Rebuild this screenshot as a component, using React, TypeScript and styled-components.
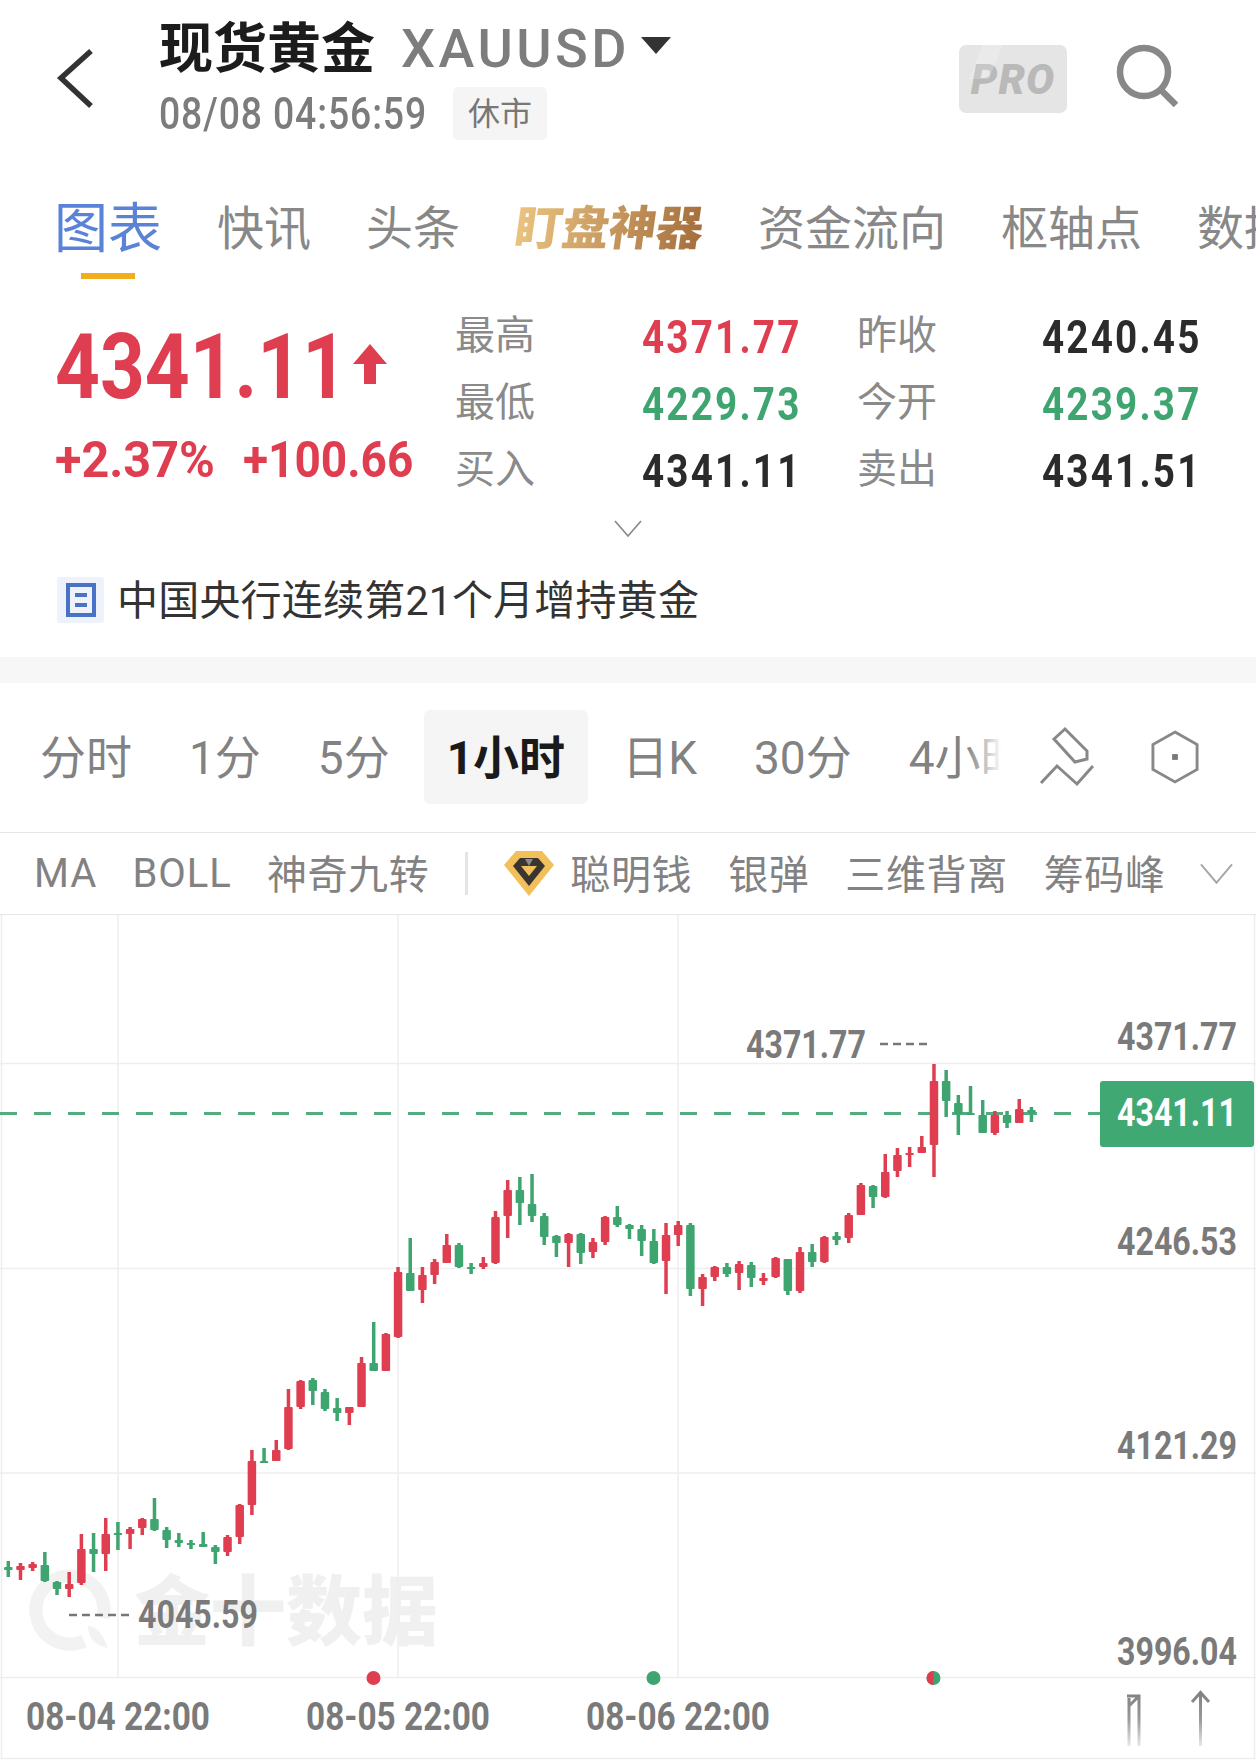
import React from 'react';
import styled, { createGlobalStyle } from 'styled-components';

const SANS = `Roboto, "Noto Sans CJK SC", sans-serif`;
const CJK = `"Noto Sans CJK SC", sans-serif`;

const RED = '#de3e50';
const GREEN = '#3fa570';
const GRID = '#eeeeee';
const AXIS_TEXT = '#7a7a7a';

// x is derived from the index, each row: wick top, wick bottom, body top, body bottom, colour
const candles: [number, number, number, number, 'r' | 'g'][] = [
  [1561, 1577, 1567, 1570, 'g'], [1563, 1580, 1566, 1570, 'r'], [1562, 1571, 1564, 1568, 'r'],
  [1552, 1582, 1565, 1581, 'g'], [1581, 1595, 1582, 1589, 'g'], [1572, 1597, 1584, 1589, 'r'],
  [1534, 1585, 1549, 1583, 'r'], [1533, 1572, 1549, 1554, 'g'], [1518, 1571, 1534, 1554, 'r'],
  [1522, 1550, 1533, 1535, 'g'], [1527, 1549, 1529, 1534, 'r'], [1518, 1535, 1519, 1528, 'r'],
  [1498, 1531, 1519, 1530, 'g'], [1527, 1548, 1530, 1540, 'g'], [1533, 1547, 1540, 1543, 'g'],
  [1540, 1549, 1543, 1545, 'g'], [1532, 1547, 1544, 1547, 'g'], [1545, 1564, 1547, 1552, 'g'],
  [1535, 1556, 1537, 1552, 'r'], [1504, 1544, 1505, 1537, 'r'], [1450, 1515, 1461, 1505, 'r'],
  [1448, 1463, 1461, 1463, 'g'], [1440, 1461, 1450, 1461, 'r'], [1389, 1450, 1407, 1449, 'r'],
  [1380, 1409, 1381, 1407, 'r'], [1378, 1405, 1380, 1391, 'g'], [1389, 1411, 1392, 1409, 'g'],
  [1398, 1421, 1408, 1413, 'g'], [1407, 1425, 1407, 1413, 'r'], [1357, 1407, 1363, 1407, 'r'],
  [1322, 1371, 1363, 1371, 'g'], [1333, 1371, 1334, 1371, 'r'], [1267, 1338, 1272, 1337, 'r'],
  [1238, 1291, 1273, 1291, 'g'], [1267, 1303, 1275, 1290, 'r'], [1259, 1284, 1262, 1275, 'r'],
  [1234, 1263, 1245, 1263, 'r'], [1243, 1268, 1245, 1267, 'g'], [1263, 1274, 1267, 1269, 'g'],
  [1257, 1269, 1263, 1267, 'r'], [1211, 1264, 1217, 1263, 'r'], [1180, 1238, 1190, 1216, 'r'],
  [1177, 1225, 1190, 1203, 'g'], [1174, 1222, 1204, 1216, 'g'], [1213, 1245, 1216, 1237, 'g'],
  [1235, 1257, 1236, 1243, 'g'], [1233, 1267, 1234, 1243, 'r'], [1233, 1264, 1234, 1253, 'g'],
  [1238, 1258, 1242, 1252, 'r'], [1216, 1245, 1217, 1242, 'r'], [1206, 1227, 1217, 1225, 'g'],
  [1224, 1239, 1225, 1229, 'g'], [1225, 1256, 1229, 1241, 'g'], [1229, 1264, 1241, 1263, 'g'],
  [1223, 1294, 1235, 1261, 'r'], [1221, 1246, 1225, 1235, 'r'], [1223, 1296, 1225, 1289, 'g'],
  [1274, 1306, 1277, 1289, 'r'], [1266, 1281, 1267, 1277, 'r'], [1263, 1277, 1267, 1274, 'g'],
  [1261, 1290, 1264, 1273, 'r'], [1262, 1287, 1265, 1278, 'g'], [1273, 1285, 1278, 1281, 'r'],
  [1257, 1278, 1258, 1277, 'r'], [1259, 1295, 1259, 1291, 'g'], [1247, 1293, 1252, 1291, 'r'],
  [1244, 1267, 1252, 1262, 'g'], [1236, 1263, 1237, 1262, 'r'], [1232, 1245, 1236, 1240, 'g'],
  [1213, 1243, 1215, 1238, 'r'], [1183, 1215, 1185, 1215, 'r'], [1185, 1208, 1186, 1197, 'g'],
  [1154, 1198, 1172, 1197, 'r'], [1148, 1177, 1155, 1171, 'r'], [1147, 1167, 1153, 1155, 'r'],
  [1136, 1153, 1147, 1153, 'r'], [1064, 1177, 1081, 1145, 'r'], [1070, 1117, 1081, 1101, 'g'],
  [1095, 1135, 1103, 1114, 'g'], [1086, 1115, 1113, 1115, 'g'], [1100, 1133, 1115, 1133, 'g'],
  [1111, 1135, 1115, 1133, 'r'], [1111, 1128, 1115, 1123, 'g'], [1099, 1123, 1109, 1123, 'r'],
  [1107, 1122, 1110, 1113, 'g'],
];

const stats = [
  { label: '最高', value: '4371.77', color: RED, label2: '昨收', value2: '4240.45', color2: '#2b2b2b' },
  { label: '最低', value: '4229.73', color: GREEN, label2: '今开', value2: '4239.37', color2: GREEN },
  { label: '买入', value: '4341.11', color: '#2b2b2b', label2: '卖出', value2: '4341.51', color2: '#2b2b2b' },
];

const tabs = ['快讯', '头条'];
const tabsAfter = ['资金流向', '枢轴点', '数据'];
const periods = ['分时', '1分', '5分', '1小时', '日K', '30分', '4小时'];
const indicatorsRight = ['银弹', '三维背离', '筹码峰'];

const GlobalStyle = createGlobalStyle`
  html, body {
    margin: 0;
    padding: 0;
    background: #ffffff;
  }
  #root {
    height: 1760px;
    overflow: hidden;
  }
`;

const Page = styled.div`
  width: 1256px;
  font-family: ${SANS};
  background: #ffffff;
`;

const Header = styled.header`
  height: 180px;
  display: flex;
  align-items: flex-start;
  box-sizing: border-box;
`;

const BackIcon = styled.svg`
  width: 40px;
  height: 64px;
  margin: 47px 0 0 56px;
  flex: none;
`;

const TitleBlock = styled.div`
  margin-left: 63px;
  padding-top: 18px;
  display: flex;
  flex-direction: column;
  flex: 1;
`;

const TitleRow = styled.div`
  display: flex;
  align-items: center;
  height: 60px;
`;

const Title = styled.h1`
  margin: 0 0 7px;
  font-size: 54px;
  font-weight: 700;
  color: #1c1c1c;
  font-family: ${CJK};
`;

const Symbol = styled.span`
  margin-left: 26px;
  font-size: 54px;
  font-weight: 500;
  letter-spacing: 3.5px;
  color: #7d7d7d;
`;

const Caret = styled.span`
  width: 0;
  height: 0;
  margin: 0 0 6px 11px;
  border-left: 15px solid transparent;
  border-right: 15px solid transparent;
  border-top: 17px solid #333333;
`;

const SubRow = styled.div`
  display: flex;
  align-items: center;
  margin-top: 9px;
`;

// there is no DIN style face installed, the numerals are Roboto narrowed on the x axis
const Clock = styled.span`
  width: 265px;
  font-size: 44px;
  font-weight: 500;
  letter-spacing: 1px;
  color: #7c7c7c;
  white-space: nowrap;
  transform: scaleX(0.85);
  transform-origin: left center;
`;

const StatusBadge = styled.span`
  margin-left: 29px;
  width: 94px;
  height: 53px;
  padding-bottom: 6px;
  box-sizing: border-box;
  border-radius: 5px;
  background: #f5f5f5;
  color: #777777;
  font-size: 32px;
  display: flex;
  align-items: center;
  justify-content: center;
  font-family: ${CJK};
`;

const ProBadge = styled.div`
  position: relative;
  overflow: hidden;
  width: 108px;
  height: 68px;
  margin: 45px 49px 0 0;
  border-radius: 7px;
  background: #e5e5e5;
  color: #b9b9b9;
  font-size: 42px;
  font-weight: 900;
  font-style: italic;
  letter-spacing: 1px;
  display: flex;
  align-items: center;
  justify-content: center;
  flex: none;
  &::before {
    content: '';
    position: absolute;
    top: -6px;
    left: 18px;
    width: 20px;
    height: 40px;
    background: rgba(255, 255, 255, 0.2);
    transform: skewX(-22deg);
  }
`;

const SearchIcon = styled.svg`
  width: 64px;
  height: 64px;
  margin: 43px 76px 0 0;
  flex: none;
`;

const TabRow = styled.nav`
  height: 100px;
  display: flex;
  padding-left: 54px;
  gap: 55px;
  overflow: hidden;
  white-space: nowrap;
  font-family: ${CJK};
`;

const Tab = styled.span`
  flex: none;
  font-size: 47px;
  line-height: 89px;
  color: #888888;
`;

const ActiveTab = styled(Tab)`
  position: relative;
  font-size: 54px;
  color: #5a82d6;
  &::after {
    content: '';
    position: absolute;
    left: 27px;
    bottom: 1px;
    width: 54px;
    height: 6px;
    background: #f0ae1f;
  }
`;

const GoldTab = styled(Tab)`
  font-weight: 900;
  background: linear-gradient(90deg, #eac480, #a56e3c);
  -webkit-background-clip: text;
  background-clip: text;
  color: transparent;
  transform: skewX(-8deg);
`;

const QuoteRow = styled.section`
  margin-top: 21px;
  height: 203px;
  display: flex;
`;

const QuoteMain = styled.div`
  width: 455px;
  padding: 16px 0 0 55px;
  box-sizing: border-box;
  flex: none;
`;

const PriceLine = styled.div`
  display: flex;
  align-items: center;
  height: 100px;
`;

const Price = styled.span`
  width: 281px;
  font-size: 91px;
  font-weight: 700;
  color: ${RED};
  white-space: nowrap;
  transform: scaleX(0.86);
  transform-origin: left center;
`;

const PriceArrow = styled.svg`
  width: 34px;
  height: 40px;
  margin: 0 0 6px 17px;
`;

const ChangeLine = styled.div`
  display: flex;
  margin-top: 18px;
  font-size: 50px;
  line-height: 50px;
  font-weight: 700;
  color: ${RED};
`;

const ChangeValue = styled.span<{ $width: number; $scale: number }>`
  width: ${props => props.$width}px;
  white-space: nowrap;
  transform: scaleX(${props => props.$scale});
  transform-origin: left center;
`;

const StatGrid = styled.div`
  display: grid;
  grid-template-columns: 187px 215px 185px auto;
  grid-auto-rows: 67.4px;
  align-items: center;
`;

const StatLabel = styled.span`
  font-size: 40px;
  margin-top: -6px;
  color: #8a8a8a;
  font-family: ${CJK};
`;

const StatValue = styled.span<{ $color: string }>`
  font-size: 46px;
  font-weight: 700;
  letter-spacing: 2.6px;
  margin-top: 4px;
  color: ${props => props.$color};
  transform: scaleX(0.84);
  transform-origin: left center;
  white-space: nowrap;
`;

const ExpandRow = styled.div`
  height: 48px;
  display: flex;
  justify-content: center;
  padding-top: 16px;
  box-sizing: border-box;
`;

const NewsRow = styled.div`
  height: 105px;
  padding: 25px 0 0 57px;
  box-sizing: border-box;
  display: flex;
  align-items: flex-start;
`;

const NewsIcon = styled.svg`
  width: 47px;
  height: 46px;
  flex: none;
`;

const NewsText = styled.span`
  margin-left: 13px;
  font-size: 41px;
  line-height: 48px;
  letter-spacing: 0.2px;
  color: #333333;
`;

const Band = styled.div`
  height: 26px;
  background: #f7f7f7;
`;

const PeriodRow = styled.div`
  height: 150px;
  box-sizing: border-box;
  padding-bottom: 2px;
  border-bottom: 1px solid #e6e6e6;
  display: flex;
  align-items: center;
`;

const PeriodList = styled.div`
  position: relative;
  width: 1012px;
  padding-left: 17px;
  box-sizing: border-box;
  flex: none;
  display: flex;
  gap: 11px;
  overflow: hidden;
  &::after {
    content: '';
    position: absolute;
    top: 0;
    bottom: 0;
    right: 0;
    width: 46px;
    background: linear-gradient(90deg, rgba(255, 255, 255, 0), #ffffff 80%);
  }
`;

const Period = styled.span<{ $active: boolean }>`
  flex: none;
  height: 94px;
  line-height: 96px;
  padding: 0 23px;
  border-radius: 6px;
  font-size: 46px;
  font-weight: ${props => (props.$active ? 700 : 400)};
  color: ${props => (props.$active ? '#1a1a1a' : '#828282')};
  background: ${props => (props.$active ? '#f5f5f5' : 'transparent')};
`;

const DrawIcon = styled.svg`
  width: 58px;
  height: 62px;
  margin-left: 26px;
  flex: none;
`;

const HexIcon = styled.svg`
  width: 48px;
  height: 56px;
  margin-left: 55px;
  flex: none;
`;

const IndicatorRow = styled.div`
  height: 82px;
  box-sizing: border-box;
  border-bottom: 1px solid #e6e6e6;
  padding-left: 34px;
  display: flex;
  align-items: center;
  font-size: 40px;
  color: #828282;
  font-family: ${CJK};
`;

const Indicator = styled.span`
  flex: none;
  margin: -4px 36px 0 0;
  letter-spacing: 0.6px;
`;

const LatinIndicator = styled.span`
  flex: none;
  margin-right: 35px;
  letter-spacing: 1px;
  font-family: Roboto, sans-serif;
`;

const Divider = styled.span`
  width: 3px;
  height: 43px;
  background: #e4e4e4;
  margin-right: 36px;
`;

const Diamond = styled.svg`
  width: 50px;
  height: 45px;
  margin-right: 16px;
  flex: none;
`;

const MoreIcon = styled.svg`
  width: 33px;
  height: 22px;
  margin-left: -2px;
  flex: none;
`;

const Chart = styled.svg`
  display: block;
  width: 1256px;
  height: 845px;
`;

const Watermark = styled.text`
  font-family: ${CJK};
  font-size: 76px;
  font-weight: 900;
  fill: #f0f0f0;
`;

const AxisLabel = styled.text`
  font-family: ${SANS};
  font-size: 38px;
  font-weight: 700;
  fill: ${AXIS_TEXT};
  dominant-baseline: central;
`;

const BadgeLabel = styled(AxisLabel)`
  fill: #ffffff;
`;

const Candle = ({ index, data }: { index: number; data: (typeof candles)[number] }) => {
  const [wickTop, wickBottom, bodyTop, bodyBottom, tone] = data;
  const x = 8.3 + index * 12.18;
  const fill = tone === 'r' ? RED : GREEN;
  return (
    <g fill={fill}>
      <rect x={x - 1.75} y={wickTop} width={3.5} height={wickBottom - wickTop} />
      <rect x={x - 4.25} y={bodyTop} width={8.5} height={Math.max(bodyBottom - bodyTop, 2)} rx={1} />
    </g>
  );
};

const priceLength = { textLength: 120, lengthAdjust: 'spacingAndGlyphs' as const };
const timeLength = { textLength: 184, lengthAdjust: 'spacingAndGlyphs' as const };

const KlineChart = () => (
  <Chart viewBox="0 915 1256 845">
    <defs>
      <linearGradient id="fadeArrow" x1="0" y1="1692" x2="0" y2="1746" gradientUnits="userSpaceOnUse">
        <stop offset="0" stopColor="#808080" />
        <stop offset="0.5" stopColor="#999999" />
        <stop offset="1" stopColor="#e8e8e8" />
      </linearGradient>
    </defs>

    {/* watermark sits under the grid and the candles */}
    <path d="M84 1641 A34 34 0 1 1 103 1618" fill="none" stroke="#f2f2f2" strokeWidth="13" />
    <path d="M88 1626 Q100 1626 108 1648 Q88 1644 88 1626Z" fill="#f2f2f2" />
    <Watermark x="134" y="1639">金十数据</Watermark>

    <g stroke={GRID} strokeWidth="1.5">
      <line x1="1.5" y1="915" x2="1.5" y2="1758" />
      <line x1="1254.5" y1="915" x2="1254.5" y2="1758" />
      <line x1="118" y1="915" x2="118" y2="1678" />
      <line x1="398" y1="915" x2="398" y2="1678" />
      <line x1="678" y1="915" x2="678" y2="1678" />
      <line x1="0" y1="1063.5" x2="1256" y2="1063.5" />
      <line x1="0" y1="1268.5" x2="1256" y2="1268.5" />
      <line x1="0" y1="1473" x2="1256" y2="1473" />
      <line x1="0" y1="1677.5" x2="1256" y2="1677.5" />
      <line x1="0" y1="1758.5" x2="1256" y2="1758.5" />
    </g>

    <line x1="0" y1="1113.5" x2="1100" y2="1113.5" stroke="#55ab80" strokeWidth="3" strokeDasharray="17 17" />

    {candles.map((candle, index) => (
      <Candle key={index} index={index} data={candle} />
    ))}

    <line x1="880" y1="1044" x2="928" y2="1044" stroke="#777777" strokeWidth="2.5" strokeDasharray="8 5" />
    <AxisLabel x="746" y="1045" {...priceLength}>4371.77</AxisLabel>
    <line x1="69" y1="1615" x2="131" y2="1615" stroke="#777777" strokeWidth="2.5" strokeDasharray="8 5" />
    <AxisLabel x="138" y="1615" {...priceLength}>4045.59</AxisLabel>

    <AxisLabel x="1117" y="1037" {...priceLength}>4371.77</AxisLabel>
    <AxisLabel x="1117" y="1242" {...priceLength}>4246.53</AxisLabel>
    <AxisLabel x="1117" y="1446" {...priceLength}>4121.29</AxisLabel>
    <AxisLabel x="1117" y="1652" {...priceLength}>3996.04</AxisLabel>

    <rect x="1100" y="1081" width="154" height="66" rx="3" fill="#40a873" />
    <BadgeLabel x="1117" y="1113" {...priceLength}>4341.11</BadgeLabel>

    <circle cx="373.5" cy="1678" r="7" fill={RED} />
    <circle cx="653.5" cy="1678" r="7" fill={GREEN} />
    <circle cx="933.5" cy="1678" r="7" fill={GREEN} />
    <path d="M933.5 1671 A7 7 0 0 0 933.5 1685Z" fill={RED} />

    <AxisLabel x="26" y="1717" {...timeLength}>08-04 22:00</AxisLabel>
    <AxisLabel x="306" y="1717" {...timeLength}>08-05 22:00</AxisLabel>
    <AxisLabel x="586" y="1717" {...timeLength}>08-06 22:00</AxisLabel>

    <g fill="none" stroke="url(#fadeArrow)" strokeWidth="3">
      <path d="M1129 1746 V1698 M1139 1746 V1696 H1127 M1139 1696 L1129 1706" />
      <path d="M1200.5 1746 V1693 M1192 1702 L1200.5 1692.5 L1209 1702" />
    </g>
  </Chart>
);

const App = () => (
  <Page>
    <GlobalStyle />
    <Header>
      <BackIcon viewBox="0 0 40 64">
        <polyline points="35,5 5,32 35,60" fill="none" stroke="#333333" strokeWidth="5.5" transform="translate(0 -1)" />
      </BackIcon>
      <TitleBlock>
        <TitleRow>
          <Title>现货黄金</Title>
          <Symbol>XAUUSD</Symbol>
          <Caret />
        </TitleRow>
        <SubRow>
          <Clock>08/08 04:56:59</Clock>
          <StatusBadge>休市</StatusBadge>
        </SubRow>
      </TitleBlock>
      <ProBadge>PRO</ProBadge>
      <SearchIcon viewBox="0 0 64 64">
        <circle cx="28" cy="29" r="24" fill="none" stroke="#888888" strokeWidth="6.5" />
        <line x1="45" y1="47" x2="60" y2="62" stroke="#888888" strokeWidth="6.5" />
      </SearchIcon>
    </Header>

    <TabRow>
      <ActiveTab>图表</ActiveTab>
      {tabs.map(tab => (
        <Tab key={tab}>{tab}</Tab>
      ))}
      <GoldTab>盯盘神器</GoldTab>
      {tabsAfter.map(tab => (
        <Tab key={tab}>{tab}</Tab>
      ))}
    </TabRow>

    <QuoteRow>
      <QuoteMain>
        <PriceLine>
          <Price>4341.11</Price>
          <PriceArrow viewBox="0 0 34 40">
            <path d="M17 0 L34 20 H23 V40 H11 V20 H0Z" fill={RED} />
          </PriceArrow>
        </PriceLine>
        <ChangeLine>
          <ChangeValue $width={188} $scale={0.97}>+2.37%</ChangeValue>
          <ChangeValue $width={170} $scale={0.92}>+100.66</ChangeValue>
        </ChangeLine>
      </QuoteMain>
      <StatGrid>
        {stats.map(row => (
          <React.Fragment key={row.label}>
            <StatLabel>{row.label}</StatLabel>
            <StatValue $color={row.color}>{row.value}</StatValue>
            <StatLabel>{row.label2}</StatLabel>
            <StatValue $color={row.color2}>{row.value2}</StatValue>
          </React.Fragment>
        ))}
      </StatGrid>
    </QuoteRow>

    <ExpandRow>
      <svg width="28" height="18" viewBox="0 0 28 18">
        <polyline points="1,1 14,16 27,1" fill="none" stroke="#8c8c8c" strokeWidth="1.8" />
      </svg>
    </ExpandRow>

    <NewsRow>
      <NewsIcon viewBox="0 0 47 46">
        <rect width="47" height="46" rx="3" fill="#eef3fb" />
        <rect x="11" y="8" width="26" height="30" fill="none" stroke="#4a72c4" strokeWidth="4" />
        <rect x="18" y="16" width="12" height="4" fill="#4a72c4" />
        <rect x="18" y="26" width="12" height="4" fill="#4a72c4" />
      </NewsIcon>
      <NewsText>中国央行连续第21个月增持黄金</NewsText>
    </NewsRow>

    <Band />

    <PeriodRow>
      <PeriodList>
        {periods.map(period => (
          <Period key={period} $active={period === '1小时'}>
            {period}
          </Period>
        ))}
      </PeriodList>
      <DrawIcon viewBox="0 0 58 62">
        <g fill="none" stroke="#888888" strokeWidth="3">
          <polygon points="27,3 16,13 37,36 49,33 49,25" />
          <polyline points="3,57 19,40 39,58 55,40" />
        </g>
      </DrawIcon>
      <HexIcon viewBox="0 0 50 56">
        <polygon points="25,2 48,15 48,41 25,54 2,41 2,15" fill="none" stroke="#888888" strokeWidth="3" />
        <rect x="22" y="25" width="6" height="6" fill="#777777" />
      </HexIcon>
    </PeriodRow>

    <IndicatorRow>
      <LatinIndicator>MA</LatinIndicator>
      <LatinIndicator>BOLL</LatinIndicator>
      <Indicator>神奇九转</Indicator>
      <Divider />
      <Diamond viewBox="0 0 50 45">
        <path d="M0 14 L12 0 H38 L50 14 L25 45Z" fill="#f2c05a" />
        <path d="M9 15 L16 7 H34 L41 15 L25 35Z" fill="#3b3530" />
        <path d="M17 15 H33 L25 25Z" fill="#f2c05a" />
        <path d="M21 8 H29 L25 15Z" fill="#8d8a86" />
      </Diamond>
      <Indicator>聪明钱</Indicator>
      {indicatorsRight.map(item => (
        <Indicator key={item}>{item}</Indicator>
      ))}
      <MoreIcon viewBox="0 0 34 22">
        <polyline points="1,1 17,20 33,1" fill="none" stroke="#a8a8a8" strokeWidth="2" />
      </MoreIcon>
    </IndicatorRow>

    <KlineChart />
  </Page>
);

export default App;
